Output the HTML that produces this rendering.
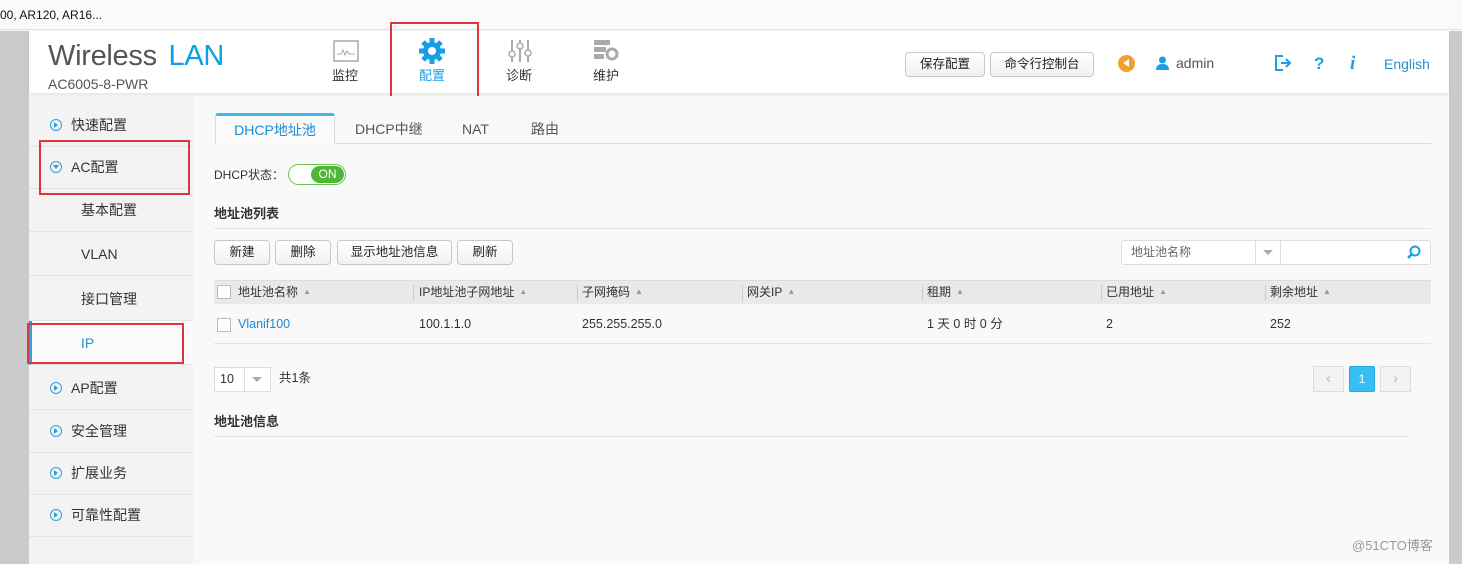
<!DOCTYPE html>
<html><head><meta charset="utf-8"><style>
*{margin:0;padding:0;box-sizing:border-box}
body{width:1462px;height:564px;overflow:hidden;background:#f8f8f8;font-family:"Liberation Sans","Noto Sans CJK SC",sans-serif;color:#333;position:relative;font-size:13px;line-height:1.25}
.abs{position:absolute}
.top{left:0;top:0;width:1462px;height:30px;background:#fafafa;border-bottom:1px solid #e0e0e0}
.lbar{left:0;top:31px;width:29px;height:533px;background:#cbcbcb}
.rbar{left:1449px;top:31px;width:13px;height:533px;background:#cbcbcb}
.hdr{left:29px;top:31px;width:1420px;height:62px;background:#fff;box-shadow:0 2px 4px rgba(0,0,0,.08)}
.side{left:29px;top:96px;width:164px;height:468px;background:#f3f3f3}
.main{left:193px;top:96px;width:1256px;height:468px;background:#f9f9f9}
.si{position:absolute;left:29px;width:164px;height:44px;border-bottom:1px solid #e4e4e4;font-size:14px;color:#333;line-height:44px}
.ic{display:inline-block;width:12px;height:12px;border:1.5px solid #29a3dc;border-radius:50%;position:absolute;left:21px;top:16px}
.ic:after{content:"";position:absolute;left:3px;top:2px;border-left:4px solid #29a3dc;border-top:3px solid transparent;border-bottom:3px solid transparent}
.ic.d:after{left:1.5px;top:3px;border-top:4px solid #29a3dc;border-left:3px solid transparent;border-right:3px solid transparent;border-bottom:0}
.btn{position:absolute;height:25px;border:1px solid #c8c8c8;border-radius:4px;background:linear-gradient(#fff,#f1f1f1);font-size:12.5px;line-height:23px;text-align:center;color:#222}
.red{position:absolute;border:2px solid #e0353b}
.th{position:absolute;top:284px;font-size:12px;color:#333;line-height:16px}
.td{position:absolute;top:316px;font-size:12.5px;color:#333;line-height:16px;height:16px}
.tri{font-size:8px;color:#999;margin-left:5px;vertical-align:2px}
.sep{position:absolute;top:285px;width:1px;height:16px;background:#ccc}
</style></head><body>
<div class="abs top"></div>
<div class="abs" style="left:0;top:8px;font-size:12px;color:#111">00, AR120, AR16...</div>
<div class="abs lbar"></div><div class="abs rbar"></div>
<div class="abs hdr"></div>
<div class="abs" style="left:48px;top:38px;font-size:29px;color:#555;letter-spacing:-.3px">Wireless <span style="color:#0aa0e8;margin-left:4px">LAN</span></div>
<div class="abs" style="left:48px;top:76px;font-size:14px;color:#555">AC6005-8-PWR</div>
<svg class="abs" style="left:333px;top:40px" width="26" height="22"><rect x="1" y="1" width="24" height="20" fill="none" stroke="#aaa" stroke-width="1.5"/><path d="M4 14 L8 14 L10 10 L12 15 L14 11 L16 14 L22 14" fill="none" stroke="#aaa"/></svg>
<div class="abs" style="left:332px;top:68px;font-size:13px;color:#333">监控</div>
<svg class="abs" style="left:418px;top:37px" width="28" height="28" viewBox="0 0 28 28"><g fill="#1a9ee6"><circle cx="14" cy="14" r="9"/><g stroke="#1a9ee6" stroke-width="5"><line x1="14" y1="1" x2="14" y2="27"/><line x1="1" y1="14" x2="27" y2="14"/><line x1="5" y1="5" x2="23" y2="23"/><line x1="23" y1="5" x2="5" y2="23"/></g></g><circle cx="14" cy="14" r="4" fill="#fff"/></svg>
<div class="abs" style="left:419px;top:68px;font-size:13px;color:#1a9ee6">配置</div>
<svg class="abs" style="left:507px;top:38px" width="26" height="26"><g stroke="#aaa" stroke-width="2"><line x1="5" y1="2" x2="5" y2="24"/><line x1="13" y1="2" x2="13" y2="24"/><line x1="21" y1="2" x2="21" y2="24"/></g><g fill="#fff" stroke="#aaa" stroke-width="1.5"><circle cx="5" cy="16" r="3"/><circle cx="13" cy="8" r="3"/><circle cx="21" cy="15" r="3"/></g></svg>
<div class="abs" style="left:506px;top:68px;font-size:13px;color:#333">诊断</div>
<svg class="abs" style="left:593px;top:39px" width="26" height="24"><rect x="1" y="1" width="16" height="5" fill="#aaa"/><rect x="1" y="8" width="12" height="5" fill="#aaa"/><rect x="1" y="15" width="10" height="5" fill="#aaa"/><circle cx="19" cy="15" r="5" fill="none" stroke="#aaa" stroke-width="3"/></svg>
<div class="abs" style="left:593px;top:68px;font-size:13px;color:#333">维护</div>
<div class="red" style="left:390px;top:22px;width:89px;height:83px"></div>
<div class="btn" style="left:905px;top:52px;width:80px">保存配置</div>
<div class="btn" style="left:990px;top:52px;width:104px">命令行控制台</div>
<div class="abs" style="left:1118px;top:55px;width:17px;height:17px;border-radius:50%;background:#f0a030"></div>
<div class="abs" style="left:1123px;top:59px;border-right:6px solid #fff;border-top:4.5px solid transparent;border-bottom:4.5px solid transparent"></div>
<svg class="abs" style="left:1156px;top:56px" width="13" height="14"><circle cx="6.5" cy="4" r="3.5" fill="#1a9ee6"/><path d="M0 14 Q0 8 6.5 8 Q13 8 13 14Z" fill="#1a9ee6"/></svg>
<div class="abs" style="left:1176px;top:55px;font-size:14px;color:#555">admin</div>
<svg class="abs" style="left:1275px;top:55px" width="18" height="16"><path d="M8 1 H1 V15 H8" fill="none" stroke="#1a9ee6" stroke-width="2"/><path d="M6 8 H15 M11 4 L15 8 L11 12" fill="none" stroke="#1a9ee6" stroke-width="2"/></svg>
<div class="abs" style="left:1314px;top:53px;font-size:17px;font-weight:bold;color:#1a9ee6">?</div>
<div class="abs" style="left:1350px;top:52px;font-size:19px;font-weight:bold;font-style:italic;font-family:'Liberation Serif',serif;color:#1a9ee6">i</div>
<div class="abs" style="left:1384px;top:56px;font-size:14px;color:#2a8fd0">English</div>
<div class="abs side"></div>
<div class="si" style="top:103px"><span class="ic"></span><span style="margin-left:42px">快速配置</span></div>
<div class="si" style="top:145px"><span class="ic d"></span><span style="margin-left:42px">AC配置</span></div>
<div class="si" style="top:188px"><span style="margin-left:52px">基本配置</span></div>
<div class="si" style="top:232px"><span style="margin-left:52px">VLAN</span></div>
<div class="si" style="top:277px"><span style="margin-left:52px">接口管理</span></div>
<div class="si" style="top:321px;background:#fafafa;color:#2a8fd0;border-left:3px solid #29a3dc"><span style="margin-left:49px">IP</span></div>
<div class="si" style="top:366px"><span class="ic"></span><span style="margin-left:42px">AP配置</span></div>
<div class="si" style="top:409px"><span class="ic"></span><span style="margin-left:42px">安全管理</span></div>
<div class="si" style="top:451px"><span class="ic"></span><span style="margin-left:42px">扩展业务</span></div>
<div class="si" style="top:493px"><span class="ic"></span><span style="margin-left:42px">可靠性配置</span></div>
<div class="red" style="left:39px;top:140px;width:151px;height:55px"></div>
<div class="red" style="left:27px;top:323px;width:157px;height:41px"></div>
<div class="abs main"></div>
<div class="abs" style="left:214px;top:143px;width:1217px;height:1px;background:#ddd"></div>
<div class="abs" style="left:215px;top:113px;width:120px;height:31px;background:#fafafa;border:1px solid #ddd;border-bottom:none;border-top:3px solid #3fb8ec;border-radius:3px 3px 0 0;font-size:14px;color:#1a8ad0;text-align:center;line-height:29px">DHCP地址池</div>
<div class="abs" style="left:355px;top:121px;font-size:14px;color:#555">DHCP中继</div>
<div class="abs" style="left:462px;top:121px;font-size:14px;color:#555">NAT</div>
<div class="abs" style="left:531px;top:121px;font-size:14px;color:#555">路由</div>
<div class="abs" style="left:214px;top:168px;font-size:12px">DHCP状态：</div>
<div class="abs" style="left:288px;top:164px;width:58px;height:21px;border:1px solid #6cc04a;border-radius:11px;background:#fff"></div>
<div class="abs" style="left:311px;top:166px;width:33px;height:17px;border-radius:9px;background:#4fb63a;color:#fff;font-size:12px;text-align:center;line-height:17px">ON</div>
<div class="abs" style="left:214px;top:206px;font-size:13px;font-weight:bold;color:#333">地址池列表</div>
<div class="abs" style="left:214px;top:228px;width:1217px;height:1px;background:#e4e4e4"></div>
<div class="btn" style="left:214px;top:240px;width:56px">新建</div>
<div class="btn" style="left:275px;top:240px;width:56px">删除</div>
<div class="btn" style="left:337px;top:240px;width:115px">显示地址池信息</div>
<div class="btn" style="left:457px;top:240px;width:56px">刷新</div>
<div class="abs" style="left:1121px;top:240px;width:310px;height:25px;border:1px solid #ddd;background:#fff;border-radius:3px"></div>
<div class="abs" style="left:1255px;top:240px;width:26px;height:25px;border-left:1px solid #ddd;border-right:1px solid #ddd"></div>
<div class="abs" style="left:1263px;top:250px;border-top:5px solid #aaa;border-left:5px solid transparent;border-right:5px solid transparent"></div>
<div class="abs" style="left:1131px;top:245px;font-size:12px;color:#666">地址池名称</div>
<svg class="abs" style="left:1407px;top:245px" width="14" height="14"><circle cx="8" cy="6" r="4.5" fill="none" stroke="#1a9ee6" stroke-width="2"/><line x1="5" y1="9" x2="1" y2="13" stroke="#1a9ee6" stroke-width="2.5"/></svg>
<div class="abs" style="left:214px;top:280px;width:1217px;height:24px;background:#e9e9e9;border-top:1px solid #ddd"></div>
<div class="abs" style="left:217px;top:285px;width:14px;height:14px;border:1px solid #bbb;background:#fff"></div>
<div class="th" style="left:238px">地址池名称<span class="tri">▲</span></div>
<div class="sep" style="left:413px"></div><div class="th" style="left:419px">IP地址池子网地址<span class="tri">▲</span></div>
<div class="sep" style="left:577px"></div><div class="th" style="left:582px">子网掩码<span class="tri">▲</span></div>
<div class="sep" style="left:742px"></div><div class="th" style="left:747px">网关IP<span class="tri">▲</span></div>
<div class="sep" style="left:922px"></div><div class="th" style="left:927px">租期<span class="tri">▲</span></div>
<div class="sep" style="left:1101px"></div><div class="th" style="left:1106px">已用地址<span class="tri">▲</span></div>
<div class="sep" style="left:1265px"></div><div class="th" style="left:1270px">剩余地址<span class="tri">▲</span></div>
<div class="abs" style="left:217px;top:318px;width:14px;height:14px;border:1px solid #bbb;background:#fff"></div>
<div class="td" style="left:238px;color:#1a8ad0">Vlanif100</div>
<div class="td" style="left:419px">100.1.1.0</div>
<div class="td" style="left:582px">255.255.255.0</div>
<div class="td" style="left:927px">1 天 0 时 0 分</div>
<div class="td" style="left:1106px">2</div>
<div class="td" style="left:1270px">252</div>
<div class="abs" style="left:214px;top:343px;width:1217px;height:1px;background:#e4e4e4"></div>
<div class="abs" style="left:214px;top:367px;width:57px;height:25px;border:1px solid #ddd;background:#fff"></div>
<div class="abs" style="left:244px;top:367px;width:1px;height:25px;background:#ddd"></div>
<div class="abs" style="left:220px;top:372px;font-size:12.5px">10</div>
<div class="abs" style="left:252px;top:377px;border-top:5px solid #aaa;border-left:5px solid transparent;border-right:5px solid transparent"></div>
<div class="abs" style="left:279px;top:371px;font-size:12.5px">共1条</div>
<div class="abs" style="left:1313px;top:366px;width:31px;height:26px;border:1px solid #ddd;background:#f3f3f3;color:#bbb;text-align:center;line-height:24px;font-size:15px">‹</div>
<div class="abs" style="left:1349px;top:366px;width:26px;height:26px;background:#35bff2;border:1px solid #28a8dc;border-radius:2px;color:#fff;text-align:center;line-height:24px;font-size:12px">1</div>
<div class="abs" style="left:1380px;top:366px;width:31px;height:26px;border:1px solid #ddd;background:#f3f3f3;color:#bbb;text-align:center;line-height:24px;font-size:15px">›</div>
<div class="abs" style="left:214px;top:414px;font-size:13px;font-weight:bold">地址池信息</div>
<div class="abs" style="left:214px;top:436px;width:1195px;height:1px;background:#e4e4e4"></div>
<div class="abs" style="left:1352px;top:538px;font-size:13px;color:#999">@51CTO博客</div>
</body></html>
